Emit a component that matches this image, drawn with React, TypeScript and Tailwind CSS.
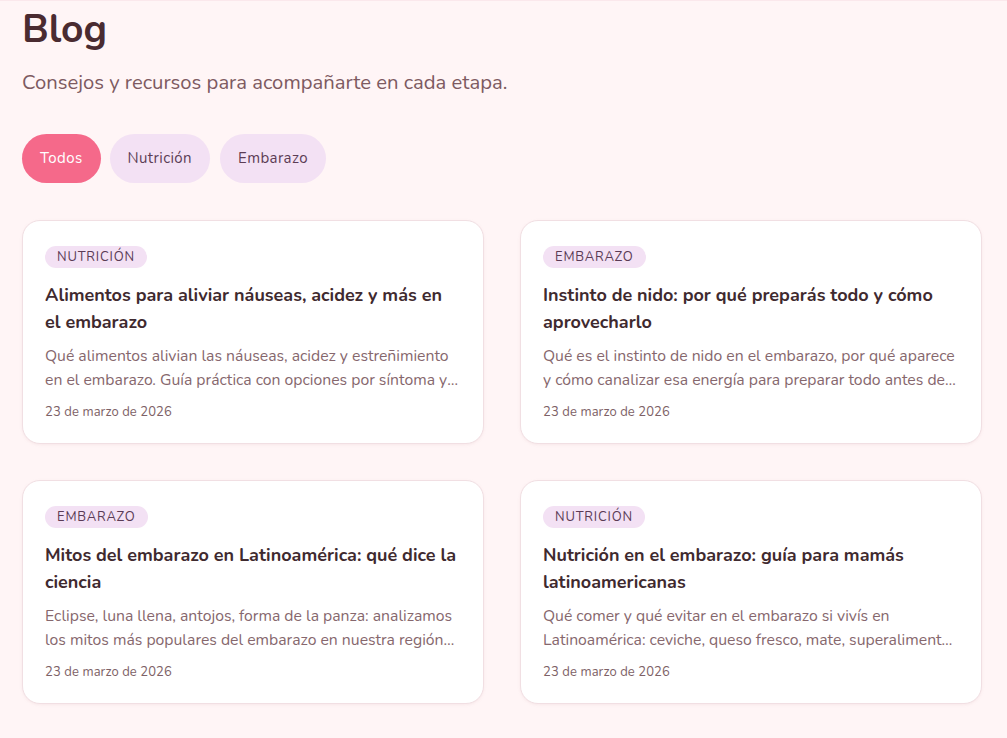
import React from "react";

const posts = [
  {
    tag: "Nutrición",
    title: "Alimentos para aliviar náuseas, acidez y más en el embarazo",
    desc: "Qué alimentos alivian las náuseas, acidez y estreñimiento en el embarazo. Guía práctica con opciones por síntoma y trimestre para sentirte mejor.",
  },
  {
    tag: "Embarazo",
    title: "Instinto de nido: por qué preparás todo y cómo aprovecharlo",
    desc: "Qué es el instinto de nido en el embarazo, por qué aparece y cómo canalizar esa energía para preparar todo antes de que llegue el bebé.",
  },
  {
    tag: "Embarazo",
    title: "Mitos del embarazo en Latinoamérica: qué dice la ciencia",
    desc: "Eclipse, luna llena, antojos, forma de la panza: analizamos los mitos más populares del embarazo en nuestra región… y lo que dice la evidencia.",
  },
  {
    tag: "Nutrición",
    title: "Nutrición en el embarazo: guía para mamás latinoamericanas",
    desc: "Qué comer y qué evitar en el embarazo si vivís en Latinoamérica: ceviche, queso fresco, mate, superalimentos y mucho más.",
  },
];

export default function App() {
  return (
    <div
      className="min-h-[738px] bg-[#fff5f6] border-t border-[#fbe8ec]"
      style={{ fontFamily: '"Nunito", "Lato", "Noto Sans", sans-serif' }}
    >
      <div className="w-[960px] ml-[22px] pt-[5px]">
        <h1 className="text-[39px] leading-[48px] font-bold text-[#4a2b31]">Blog</h1>
        <p className="mt-[15px] text-[20.25px] leading-[28px] text-[#7d5a61]">
          Consejos y recursos para acompañarte en cada etapa.
        </p>
        <div className="mt-[37px] flex gap-[9px]">
          <button className="h-[49px] px-[18px] rounded-full bg-[#f5698a] text-white text-[15px] tracking-[0.4px]">Todos</button>
          <button className="h-[49px] px-[18px] rounded-full bg-[#f3e1f4] text-[#5c3d55] text-[15px] tracking-[0.4px]">Nutrición</button>
          <button className="ml-[1px] h-[49px] px-[18px] rounded-full bg-[#f3e1f4] text-[#5c3d55] text-[15px] tracking-[0.4px]">Embarazo</button>
        </div>
        <div className="mt-[37px] grid grid-cols-2 gap-x-[36px] gap-y-[36px]">
          {posts.map((p, i) => (
            <div
              key={i}
              className="h-[224px] rounded-[18px] bg-white border border-[#f1dfe3] px-[22px] pt-[23px] shadow-[0_1px_3px_rgba(200,150,160,0.12)]"
            >
              <span className="inline-block h-[22px] leading-[22px] px-[12px] rounded-full bg-[#f3e1f4] text-[#5a3b55] text-[13px] uppercase tracking-[0.8px]">
                {p.tag}
              </span>
              <h2 className="mt-[14px] text-[18px] leading-[27px] font-bold text-[#3f2a2f]">{p.title}</h2>
              <p className="mt-[8px] text-[15.75px] leading-[24px] text-[#86676d] line-clamp-2">{p.desc}</p>
              <p className="mt-[10px] text-[13px] leading-[20px] text-[#7d6166] tracking-[0.1px]">23 de marzo de 2026</p>
            </div>
          ))}
        </div>
      </div>
    </div>
  );
}
